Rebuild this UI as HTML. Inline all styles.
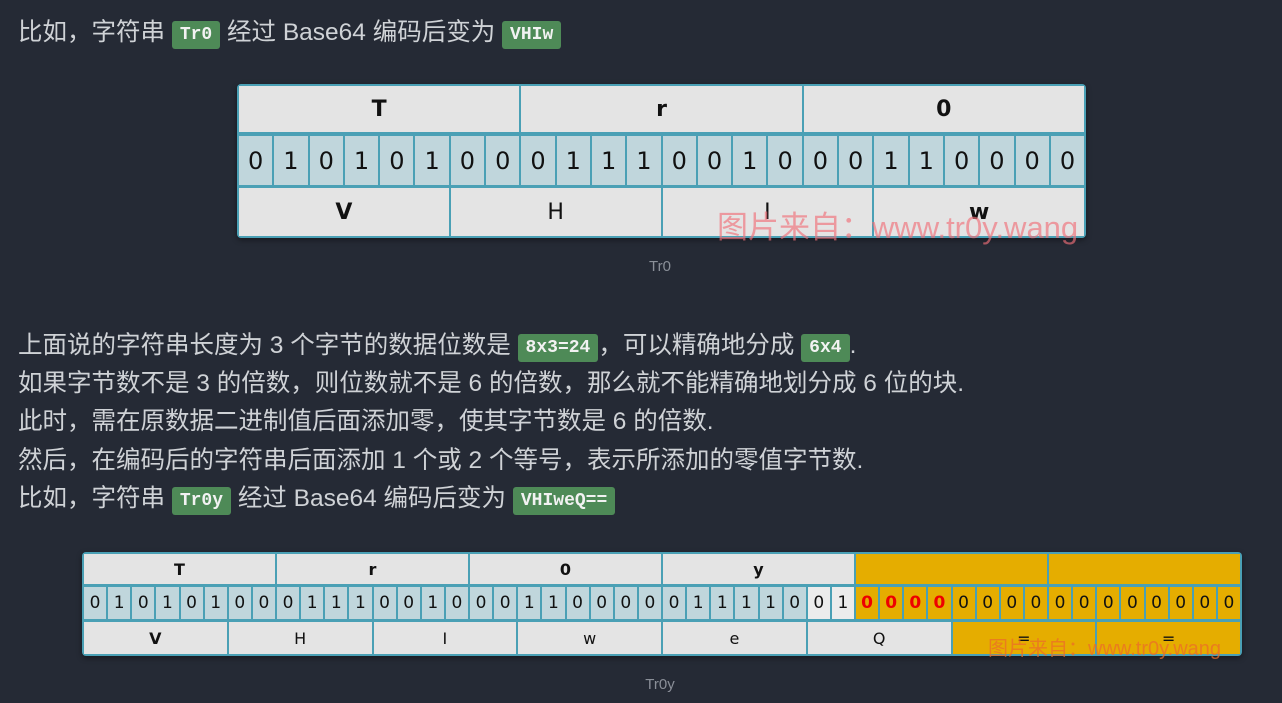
<!DOCTYPE html>
<html><head><meta charset="utf-8"><style>
body{margin:0;background:#252a35;width:1282px;height:703px;overflow:hidden;position:relative;font-family:"Liberation Sans","Noto Sans CJK SC",sans-serif;color:#cfd2d6}
.p{position:absolute;left:18px;font-size:24.5px;white-space:nowrap;line-height:30px}
code{font-family:"Liberation Mono","DejaVu Sans Mono",monospace;font-weight:bold;font-size:18px;background:#4e8a57;color:#f2f2f2;padding:4px 8px;border-radius:3px;position:relative;top:-1px}
.t{position:absolute;background:#4aa0b5;border-radius:4px;box-sizing:border-box;padding:2px;box-shadow:0 2px 6px rgba(0,0,0,.4)}
.r{display:flex;gap:2px}
.r div{flex:1;background:#e4e4e4;color:#111;display:flex;align-items:center;justify-content:center;font-family:"DejaVu Sans",sans-serif}
.r.b div{background:#c0d6dc}
.y{background:#e5ad00!important}
.w{background:#ececec!important}
.red{color:#e00!important;font-weight:bold}
.cap{position:absolute;font-size:15px;color:#8a8f98;width:1282px;text-align:center}
.wm{position:absolute;white-space:nowrap;font-family:"Liberation Sans","Noto Sans CJK SC",sans-serif}
</style></head><body>
<div class="p" style="top:18px">比如，字符串 <code>Tr0</code> 经过 Base64 编码后变为 <code>VHIw</code></div>

<div class="t" style="left:237px;top:84px;width:849px;height:154px">
<div class="r" style="height:46px;font-weight:bold;font-size:22px"><div style="font-weight:bold">T</div><div style="font-weight:bold">r</div><div style="font-weight:bold">0</div></div>
<div class="r b" style="height:49px;margin-top:4px;font-size:24px"><div>0</div><div>1</div><div>0</div><div>1</div><div>0</div><div>1</div><div>0</div><div>0</div><div>0</div><div>1</div><div>1</div><div>1</div><div>0</div><div>0</div><div>1</div><div>0</div><div>0</div><div>0</div><div>1</div><div>1</div><div>0</div><div>0</div><div>0</div><div>0</div></div>
<div class="r" style="height:48px;margin-top:3px;font-size:22px"><div style="font-weight:bold">V</div><div>H</div><div>I</div><div style="font-weight:bold">w</div></div>
</div>
<div class="wm" style="left:717px;top:202px;font-size:31px;color:rgba(240,110,120,.65)">图片来自：www.tr0y.wang</div>
<div class="cap" style="top:258px;left:19px">Tr0</div>

<div class="p" style="top:331px">上面说的字符串长度为 3 个字节的数据位数是 <code>8x3=24</code>，可以精确地分成 <code>6x4</code>.</div>
<div class="p" style="top:369px">如果字节数不是 3 的倍数，则位数就不是 6 的倍数，那么就不能精确地划分成 6 位的块.</div>
<div class="p" style="top:407px">此时，需在原数据二进制值后面添加零，使其字节数是 6 的倍数.</div>
<div class="p" style="top:446px">然后，在编码后的字符串后面添加 1 个或 2 个等号，表示所添加的零值字节数.</div>
<div class="p" style="top:484px">比如，字符串 <code>Tr0y</code> 经过 Base64 编码后变为 <code>VHIweQ==</code></div>

<div class="t" style="left:82px;top:552px;width:1160px;height:104px">
<div class="r" style="height:30px;font-size:16px"><div style="font-weight:bold">T</div><div style="font-weight:bold">r</div><div style="font-weight:bold">0</div><div style="font-weight:bold">y</div><div class="y"></div><div class="y"></div></div>
<div class="r b" style="height:32px;margin-top:3px;font-size:17px"><div>0</div><div>1</div><div>0</div><div>1</div><div>0</div><div>1</div><div>0</div><div>0</div><div>0</div><div>1</div><div>1</div><div>1</div><div>0</div><div>0</div><div>1</div><div>0</div><div>0</div><div>0</div><div>1</div><div>1</div><div>0</div><div>0</div><div>0</div><div>0</div><div>0</div><div>1</div><div>1</div><div>1</div><div>1</div><div>0</div><div class="w">0</div><div class="w">1</div><div class="y red">0</div><div class="y red">0</div><div class="y red">0</div><div class="y red">0</div><div class="y">0</div><div class="y">0</div><div class="y">0</div><div class="y">0</div><div class="y">0</div><div class="y">0</div><div class="y">0</div><div class="y">0</div><div class="y">0</div><div class="y">0</div><div class="y">0</div><div class="y">0</div></div>
<div class="r" style="height:32px;margin-top:3px;font-size:16px"><div style="font-weight:bold">V</div><div>H</div><div>I</div><div>w</div><div>e</div><div>Q</div><div class="y">=</div><div class="y">=</div></div>
</div>
<div class="wm" style="left:988px;top:632px;font-size:20px;color:rgba(235,110,40,.75)">图片来自：www.tr0y.wang</div>
<div class="cap" style="top:676px;left:19px">Tr0y</div>
</body></html>
